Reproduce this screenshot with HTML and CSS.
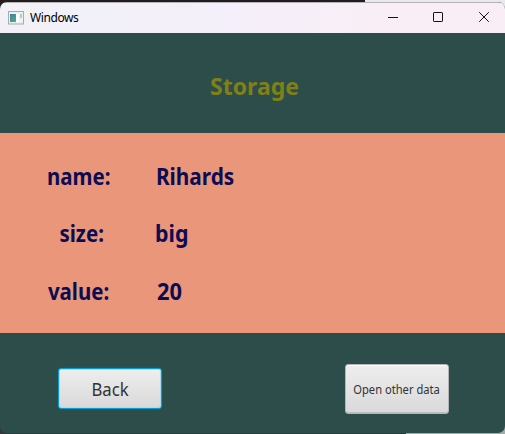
FILE: index.html
```html
<!DOCTYPE html>
<html lang="en">
<head>
<meta charset="utf-8">
<title>Windows</title>
<link rel="stylesheet" href="styles.css">
</head>
<body>
<div class="window">
  <header class="titlebar">
    <svg class="app-icon" width="16" height="14" viewBox="0 0 16 14">
      <defs><linearGradient id="g" x1="0" y1="0" x2="0.6" y2="1"><stop offset="0" stop-color="#3f7fb0"/><stop offset="1" stop-color="#4fa77c"/></linearGradient></defs>
      <rect x="0.5" y="0.5" width="15" height="12.5" fill="#eef0f0" stroke="#a9adb0"/>
      <rect x="2" y="3" width="6" height="8" fill="url(#g)"/>
      <rect x="8" y="3" width="3" height="8" fill="#fff"/>
      <rect x="11" y="3" width="3" height="8" fill="#edf3ef"/>
      <rect x="12" y="3" width="2" height="4" fill="#a8d2bb"/>
    </svg>
    <span class="caption">Windows</span>
    <div class="controls">
      <svg width="45" height="30" viewBox="0 0 45 30"><path d="M18 14.5h10"/></svg>
      <svg width="45" height="30" viewBox="0 0 45 30"><rect x="18.5" y="9.5" width="9" height="9" rx="0.6"/></svg>
      <svg width="45" height="30" viewBox="0 0 45 30"><path d="M19.2 9.2l9.6 9.6M28.8 9.2l-9.6 9.6"/></svg>
    </div>
  </header>
  <section class="heading"><h1>Storage</h1></section>
  <dl class="details">
    <dt class="name">name:</dt><dd class="name-value">Rihards</dd>
    <dt class="size">size:</dt><dd class="size-value">big</dd>
    <dt class="value">value:</dt><dd class="value-value">20</dd>
  </dl>
  <footer class="actions">
    <button class="back"><span>Back</span></button>
    <button class="open"><span>Open other data</span></button>
  </footer>
</div>
</body>
</html>
```
FILE: styles.css
```css
* { box-sizing: border-box; }
body {
  margin: 0;
  height: 434px;
  padding-top: 2px;
  overflow: hidden;
  font-family: "Noto Sans", "Open Sans", sans-serif;
  background:
    linear-gradient(90deg, #211c1e 365px, #e9e9e9 365px) 0 0 / 100% 12px no-repeat,
    linear-gradient(90deg, #34383a 406px, #a5adab 406px) 0 100% / 100% 12px no-repeat;
}
.window {
  height: 431px;
  display: grid;
  grid-template-rows: 31px 100px 200px 1fr;
  border-radius: 7px;
  overflow: hidden;
  background: #2d4d4b;
}
.titlebar {
  display: flex;
  align-items: center;
  padding-left: 8px;
  border-top: 1px solid #b5b3b7;
  background: linear-gradient(90deg, #f1f1f7, #f4effa 45%, #f9eef6 75%);
}
.app-icon { margin-top: -1px; }
.caption {
  margin-left: 6px;
  font-size: 12px;
  line-height: 16px;
  letter-spacing: -0.4px;
  color: #000;
}
.controls { display: flex; margin-left: auto; }
.controls svg { fill: none; stroke: #111; stroke-width: 1; }
.heading { display: flex; justify-content: center; padding: 36px 0 0 4px; }
h1 { margin: 0; font-size: 23px; line-height: 34px; color: #808018; }
.details {
  margin: 0;
  padding: 14px 0 0 47px;
  display: grid;
  grid-template-columns: 108px 1fr;
  grid-template-rows: 57px 58px 58px;
  background: #e9967a;
  color: #0d0c52;
  font-size: 23px;
  font-weight: 700;
  line-height: 58px;
}
dd { margin: 0; }
dt, dd { transform: scaleX(0.89); transform-origin: left; }
.size { padding-left: 14px; }
.name-value { padding-left: 1px; transform: scaleX(0.905); }
.size-value { transform: scaleX(0.93); }
.value-value { padding-left: 2px; transform: scaleX(0.95); }
.value { padding-left: 1px; }
.actions { display: flex; justify-content: space-between; align-items: flex-start; padding: 31px 56px 0 58px; }
button {
  width: 104px;
  padding: 0;
  font-family: inherit;
  color: #333;
  background: linear-gradient(#eeeeee, #d9d9d9);
  border-radius: 3px;
  white-space: nowrap;
}
button span { display: inline-block; transform: scaleX(0.93); }
.back {
  height: 41px;
  margin-top: 4px;
  border: 1px solid #039ed3;
  box-shadow: 0 0 1px 0 #0687b5, inset 0 0 0 1px #a9dcee;
  font-size: 18px;
}
.open {
  height: 50px;
  border: 1px solid #b5b7b7;
  box-shadow: inset 0 1px 0 #fafafa, inset 0 -1px 0 #bdbdbd;
  font-size: 12px;
}
```
